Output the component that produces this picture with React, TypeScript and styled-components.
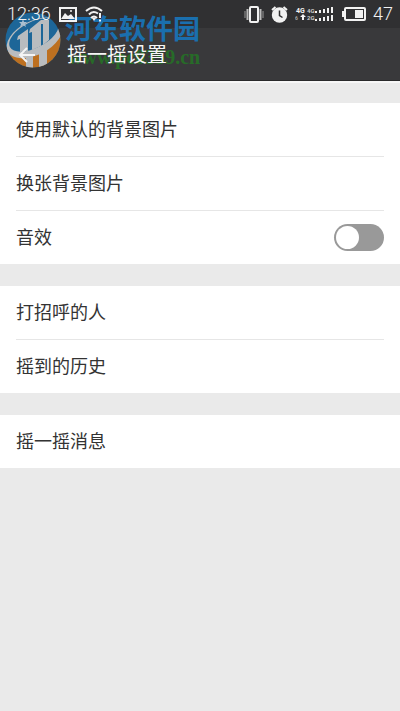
import React, { useState } from "react";
import styled, { createGlobalStyle } from "styled-components";

const GlobalStyle = createGlobalStyle`
  * { box-sizing: border-box; }
  body {
    margin: 0;
    background: #eaeaea;
    font-family: Roboto, "Noto Sans CJK SC", sans-serif;
    color: #333;
  }
`;

const Page = styled.div`
  min-height: 100vh;
  background: #eaeaea;
`;

const Top = styled.header`
  position: relative;
  isolation: isolate;
  background: #39393b;
  border-bottom: 1px solid #29292b;
`;

const StatusBar = styled.div`
  display: flex;
  align-items: center;
  justify-content: space-between;
  height: 28px;
  padding: 0 7px;
  background: #303032;
  color: #f2f2f2;
  font-size: 18px;
  font-weight: 300;
  line-height: 28px;
`;

const StatusGroup = styled.div<{ $gap: number }>`
  display: flex;
  align-items: center;
  gap: ${(p) => p.$gap}px;

  svg, span { position: relative; z-index: 1; display: block; }
`;

const TitleBar = styled.div`
  display: flex;
  align-items: center;
  height: 52px;
  padding: 2px 18px 0;
  gap: 31px;
`;

const BackButton = styled.button`
  position: relative;
  z-index: 1;
  display: flex;
  padding: 0;
  border: 0;
  background: none;
  color: #f4f4f4;
  cursor: pointer;
`;

const Title = styled.h1`
  position: relative;
  z-index: 1;
  margin: 0;
  color: #f6f6f6;
  font-size: 20px;
  font-weight: 400;
  line-height: 28px;
`;

const Watermark = styled.div`
  position: absolute;
  z-index: 0;
  top: 12px;
  left: 4px;
  display: flex;
  gap: 3px;
  pointer-events: none;
`;

const WatermarkText = styled.div`
  display: flex;
  flex-direction: column;
  white-space: nowrap;
`;

const SiteName = styled.span`
  color: #1a6fae;
  font-family: "Noto Sans CJK SC", sans-serif;
  font-size: 27px;
  font-weight: 700;
  line-height: 32px;
`;

const SiteAddress = styled.span`
  padding-left: 3px;
  color: #276b28;
  font-family: "Liberation Serif", serif;
  font-size: 20px;
  font-weight: 700;
  line-height: 26px;
`;

const Settings = styled.main`
  display: flex;
  flex-direction: column;
  gap: 22px;
  padding-top: 20px;
  border-top: 2px solid #f6f6f6;
`;

const Group = styled.section`
  padding: 0 16px;
  background: #fff;
`;

const rowStyle = `
  display: flex;
  align-items: center;
  justify-content: space-between;
  width: 100%;
  min-height: 53px;
  padding: 0;
  border: 0;
  background: none;
  color: #333;
  font-family: inherit;
  font-size: 18px;
  line-height: 26px;
  text-align: left;
  cursor: pointer;
`;

const Item = styled.div`
  & + & { border-top: 1px solid #e6e6e6; }
`;

const RowButton = styled.button`${rowStyle}`;
const RowLabel = styled.label`${rowStyle}`;

const Switch = styled.input`
  appearance: none;
  display: flex;
  align-items: center;
  justify-content: flex-start;
  width: 50px;
  height: 27px;
  margin: 0;
  padding: 0 2px;
  border-radius: 14px;
  background: #999;
  cursor: pointer;

  &::before {
    content: "";
    width: 23px;
    height: 23px;
    border-radius: 50%;
    background: #fff;
  }

  &:checked {
    justify-content: flex-end;
    background: #45c01a;
  }
`;

const Logo = () => (
  <svg width="58" height="56" viewBox="0 0 58 56" aria-hidden="true">
    <defs>
      <clipPath id="disc"><circle cx="29" cy="28" r="27.500" /></clipPath>
    </defs>
    <g clipPath="url(#disc)">
      <rect width="58" height="56" fill="#1d6698" />
      <path d="M0 38C18 46 46 36 58 16V56H0Z" fill="#bd7020" />
      <path
        fill="#b9bcbf"
        fillRule="evenodd"
        transform="rotate(-27 30 25)"
        d="M0 26A30 17 0 1 0 60 26A30 17 0 1 0 0 26ZM4 23A27 13 0 1 0 58 23A27 13 0 1 0 4 23Z"
      />
      <path d="M14 24L24 17V39L16 40V27L13 28ZM26 17L37 8V34L28 38V20L25 21ZM37 8H45V28L39 33V12H37Z" fill="#b9bcbf" />
      <path d="M22 43L29 42V56H22ZM35 40L43 35V56H35Z" fill="#b9bcbf" />
      <path d="M19 7L20 10L23 10L21 12L22 15L19 13L16 15L17 12L15 10L18 10Z" fill="#a9bfd0" />
    </g>
  </svg>
);

const PictureIcon = () => (
  <svg width="18" height="15" viewBox="0 0 18 15" aria-hidden="true">
    <rect x="1" y="1" width="16" height="13" fill="none" stroke="#f2f2f2" strokeWidth="2" />
    <path d="M2 12L6 6L9 9L12 7L16 12Z" fill="#f2f2f2" />
    <circle cx="12" cy="4" r="1" fill="#f2f2f2" />
  </svg>
);

const WifiIcon = () => (
  <svg width="18" height="16" viewBox="0 0 18 16" fill="none" stroke="#f2f2f2" strokeWidth="2" aria-hidden="true">
    <path d="M1 5Q9 -2 17 5M4 8.500Q8 4 13 7.500M6 12Q9 9 12 12" />
    <path d="M6.500 11.500H11.500L9 15Z" fill="#f2f2f2" stroke="none" />
    <path d="M15 7V12M15 13.500V15.500" />
  </svg>
);

const VibrateIcon = () => (
  <svg width="20" height="17" viewBox="0 0 20 17" fill="none" aria-hidden="true">
    <rect x="6" y="1" width="8" height="15" rx="1" stroke="#f2f2f2" strokeWidth="2" />
    <path d="M3.500 3V14M16.500 3V14" stroke="#bbb" strokeWidth="2" />
    <path d="M1 5V12M19 5V12" stroke="#999" strokeWidth="1" />
  </svg>
);

const AlarmIcon = () => (
  <svg width="17" height="17" viewBox="0 0 17 17" aria-hidden="true">
    <circle cx="8.500" cy="9" r="7.700" fill="#f2f2f2" />
    <path d="M1 4L4.500 1M16 4L12.500 1" stroke="#f2f2f2" strokeWidth="2" />
    <path d="M8.500 4.500V9.500L11.500 11.500" fill="none" stroke="#303032" strokeWidth="1.500" />
  </svg>
);

const SignalIcon = () => (
  <svg width="40" height="16" viewBox="0 0 40 16" fill="#f2f2f2" aria-hidden="true">
    <g fontFamily="Roboto, sans-serif" fontWeight="700">
      <text x="1" y="7" fontSize="7">4G</text>
      <text x="12" y="7" fontSize="6" fill="#ccc">4G</text>
      <text x="0" y="14" fontSize="5" fill="#aaa">6</text>
      <text x="12" y="14" fontSize="6" fill="#ccc">2G</text>
    </g>
    <path d="M8 8L11 11H9V14H7V11H5Z" />
    {[0, 1, 2, 3, 4].map((n) => (
      <g key={n}>
        <rect x={20 + n * 4} y={5 - n} width="2" height={2 + n} />
        <rect x={20 + n * 4} y={13 - n} width="2" height={2 + n} />
      </g>
    ))}
  </svg>
);

const BatteryIcon = () => (
  <svg width="24" height="14" viewBox="0 0 24 14" aria-hidden="true">
    <rect x="3" y="1" width="20" height="12" rx="1" fill="none" stroke="#f2f2f2" strokeWidth="2" />
    <rect x="0" y="4" width="2" height="6" fill="#f2f2f2" />
    <rect x="13" y="3" width="8" height="8" fill="#f2f2f2" />
  </svg>
);

const BackIcon = () => (
  <svg width="18" height="16" viewBox="0 0 18 16" fill="none" stroke="currentColor" strokeWidth="2" aria-hidden="true">
    <path d="M9 1L2 8L9 15M2 8H17" />
  </svg>
);

export default function App() {
  const [sound, setSound] = useState(false);

  return (
    <>
      <GlobalStyle />
      <Page>
        <Top>
          <Watermark>
            <Logo />
            <WatermarkText>
              <SiteName>河东软件园</SiteName>
              <SiteAddress>www.pc0359.cn</SiteAddress>
            </WatermarkText>
          </Watermark>
          <StatusBar>
            <StatusGroup $gap={8}>
              <span>12:36</span>
              <PictureIcon />
              <WifiIcon />
            </StatusGroup>
            <StatusGroup $gap={7}>
              <VibrateIcon />
              <AlarmIcon />
              <SignalIcon />
              <BatteryIcon />
              <span>47</span>
            </StatusGroup>
          </StatusBar>
          <TitleBar>
            <BackButton type="button" aria-label="返回"><BackIcon /></BackButton>
            <Title>摇一摇设置</Title>
          </TitleBar>
        </Top>
        <Settings>
          <Group>
            <Item><RowButton type="button">使用默认的背景图片</RowButton></Item>
            <Item><RowButton type="button">换张背景图片</RowButton></Item>
            <Item>
              <RowLabel htmlFor="sound">
                音效
                <Switch
                  id="sound"
                  type="checkbox"
                  role="switch"
                  checked={sound}
                  onChange={(e) => setSound(e.target.checked)}
                />
              </RowLabel>
            </Item>
          </Group>
          <Group>
            <Item><RowButton type="button">打招呼的人</RowButton></Item>
            <Item><RowButton type="button">摇到的历史</RowButton></Item>
          </Group>
          <Group>
            <Item><RowButton type="button">摇一摇消息</RowButton></Item>
          </Group>
        </Settings>
      </Page>
    </>
  );
}
